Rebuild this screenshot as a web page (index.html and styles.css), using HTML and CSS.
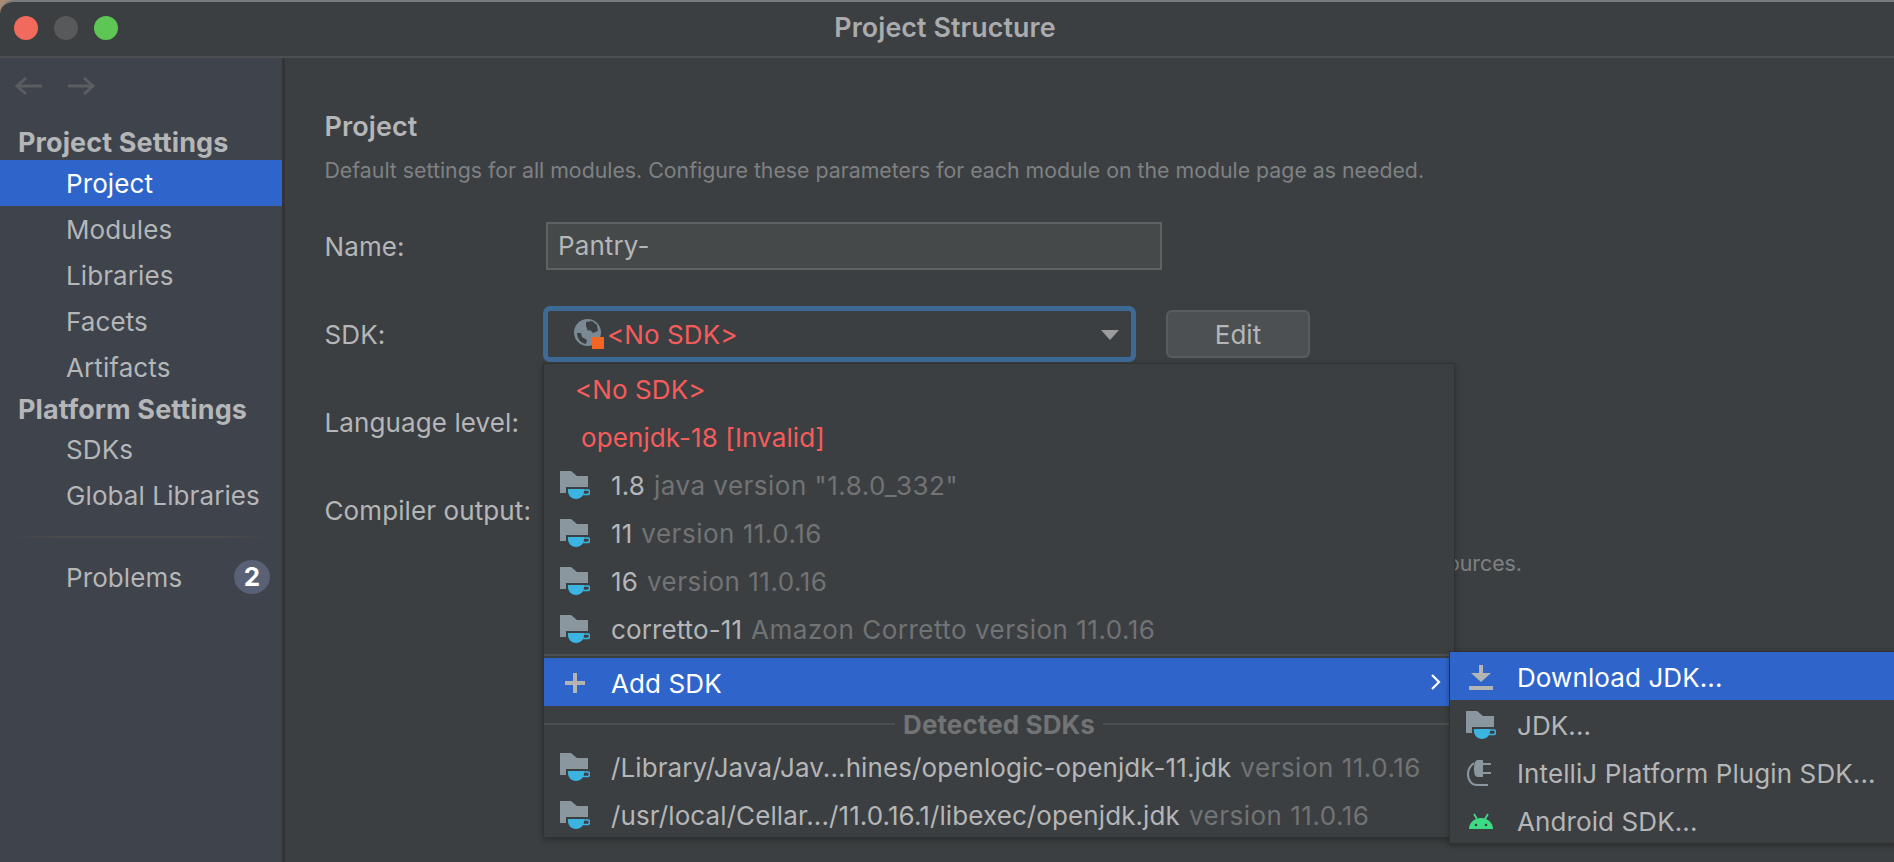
FILE: index.html
```html
<!DOCTYPE html>
<html lang="en">

<head>
    <meta charset="UTF-8">
    <meta name="viewport" content="width=device-width, initial-scale=1.0">
    <title>Project Structure</title>
    <link rel="stylesheet" href="styles.css">
</head>

<body>
    <svg class="defs" width="0" height="0">
        <symbol id="jdk" viewBox="0 0 30 28">
            <path d="M0 0h11l6 5h11v11H6v6H0z" fill="#8a979f"/>
            <path d="M8 18h16v2c0 4-3 8-8 8s-8-4-8-8z" fill="#3cb4e2"/>
            <path d="M24 19h4c2 0 2 4.500 0 4.500h-5" fill="none" stroke="#3cb4e2" stroke-width="1.600"/>
        </symbol>
    </svg>

    <div class="window">
        <header class="titlebar">
            <div class="lights">
                <span class="light red"></span>
                <span class="light grey"></span>
                <span class="light green"></span>
            </div>
            <h1>Project Structure</h1>
        </header>

        <div class="content">
            <aside class="sidebar">
                <div class="arrows">
                    <svg width="28" height="20" viewBox="0 0 28 20"><path d="M12 2 3 10l9 8M3 10h25" fill="none" stroke="#5b5d5f" stroke-width="3"/></svg>
                    <svg width="28" height="20" viewBox="0 0 28 20"><path d="M16 2l9 8-9 8M25 10H0" fill="none" stroke="#5b5d5f" stroke-width="3"/></svg>
                </div>
                <div class="side-head first">Project Settings</div>
                <a class="side-item selected">Project</a>
                <a class="side-item">Modules</a>
                <a class="side-item">Libraries</a>
                <a class="side-item">Facets</a>
                <a class="side-item">Artifacts</a>
                <div class="side-head">Platform Settings</div>
                <a class="side-item">SDKs</a>
                <a class="side-item">Global Libraries</a>
                <div class="side-divider"></div>
                <a class="side-item">Problems <span class="badge">2</span></a>
            </aside>

            <main class="main">
                <h2>Project</h2>
                <p class="desc">Default settings for all modules. Configure these parameters for each module on the module page as needed.</p>

                <div class="form">
                    <label>Name:</label>
                    <div class="name-input">Pantry-</div>

                    <label>SDK:</label>
                    <div class="sdk-row">
                        <div class="combo">
                            <svg class="globe" width="30" height="30" viewBox="0 0 30 30">
                                <circle cx="13.500" cy="13.500" r="13.500" fill="#7a8a94"/>
                                <path d="M12 3l6-1 5 4 1 6-5 2-3-3-2 1-2-5zM3 14c0 6 4 10 9 11l1-4-5-3-1-4z" fill="#3c3f41"/>
                                <rect x="18" y="18" width="12" height="12" fill="#f26522"/>
                            </svg>
                            <span class="red-text">&lt;No SDK&gt;</span>
                            <span class="caret"></span>
                        </div>
                        <button class="edit">Edit</button>
                    </div>

                    <label>Language level:</label>
                    <div></div>

                    <label>Compiler output:</label>
                    <div></div>
                </div>
                <p class="hint">ources.</p>
            </main>
        </div>

        <div class="popup">
            <div class="row no-icon"><span class="red-text">&lt;No SDK&gt;</span></div>
            <div class="row invalid"><span class="red-text">openjdk-18 [Invalid]</span></div>
            <div class="row"><svg class="ico"><use href="#jdk"/></svg><span>1.8</span> <span class="dim">java version "1.8.0_332"</span></div>
            <div class="row"><svg class="ico"><use href="#jdk"/></svg><span>11</span> <span class="dim">version 11.0.16</span></div>
            <div class="row"><svg class="ico"><use href="#jdk"/></svg><span>16</span> <span class="dim">version 11.0.16</span></div>
            <div class="row"><svg class="ico"><use href="#jdk"/></svg><span>corretto-11</span> <span class="dim">Amazon Corretto version 11.0.16</span></div>
            <div class="pop-sep"></div>
            <div class="row active">
                <svg class="ico" viewBox="0 0 28 28"><path d="M14 4v20M4 14h20" stroke="#b4b4b4" stroke-width="4"/></svg>
                <span>Add SDK</span>
                <svg class="chev" width="12" height="18" viewBox="0 0 12 18"><path d="M2 2l7 7-7 7" fill="none" stroke="#fff" stroke-width="2.200"/></svg>
            </div>
            <div class="detected"><span>Detected SDKs</span></div>
            <div class="row"><svg class="ico"><use href="#jdk"/></svg><span>/Library/Java/Jav...hines/openlogic-openjdk-11.jdk</span> <span class="dim">version 11.0.16</span></div>
            <div class="row"><svg class="ico"><use href="#jdk"/></svg><span>/usr/local/Cellar.../11.0.16.1/libexec/openjdk.jdk</span> <span class="dim">version 11.0.16</span></div>
        </div>

        <div class="submenu">
            <div class="row active">
                <svg class="ico" viewBox="0 0 28 28"><path d="M4 10h20l-10 9zM2 23h24v4H2z" fill="#b4b4b4"/><path d="M14 2v10" stroke="#b4b4b4" stroke-width="4"/></svg>
                <span>Download JDK...</span>
            </div>
            <div class="row"><svg class="ico"><use href="#jdk"/></svg><span>JDK...</span></div>
            <div class="row">
                <svg class="ico" viewBox="0 0 28 28"><path d="M11 1h5v3h8v2h-8v7h8v2h-8v3h-5c-3 0-4-3-4-8s1-9 4-9z" fill="#8a979f"/><path d="M7 4C3 7 1 10 1 15c0 7 4 11 9 11h11" fill="none" stroke="#8a979f" stroke-width="2"/></svg>
                <span>IntelliJ Platform Plugin SDK...</span>
            </div>
            <div class="row">
                <svg class="ico" viewBox="0 0 28 28"><path d="M2 22c0-6 5-11 12-11s12 5 12 11z" fill="#3ddc84"/><path d="M7 7l3 5M21 7l-3 5" stroke="#3ddc84" stroke-width="1.800"/><circle cx="9" cy="18" r="1.300" fill="#3c3f41"/><circle cx="19" cy="18" r="1.300" fill="#3c3f41"/></svg>
                <span>Android SDK...</span>
            </div>
        </div>
    </div>
</body>

</html>
```

FILE: styles.css
```css
* {
    box-sizing: border-box;
}

html, body {
    height: 100%;
}

body {
    margin: 0;
    background-color: #a98a72;
    font-family: Inter, "Open Sans", sans-serif;
    font-size: 26px;
    letter-spacing: 0.1px;
    color: #b4b6b8;
    overflow: hidden;
}

.defs {
    position: absolute;
}

.window {
    position: relative;
    height: 862px;
    background-color: #3c3f41;
    border-top: 2px solid #7a7b7c;
    border-top-left-radius: 14px;
    overflow: hidden;
}

.titlebar {
    height: 56px;
    border-bottom: 2px solid #4c4e50;
    display: flex;
    align-items: center;
    justify-content: center;
    position: relative;
    padding: 0 4px 4px 0;
}

.titlebar h1 {
    margin: 0;
    font-size: 26.8px;
    font-weight: 600;
    color: #a9abad;
}

.lights {
    position: absolute;
    left: 14px;
    top: 14px;
    display: flex;
    gap: 16px;
}

.light {
    width: 24px;
    height: 24px;
    border-radius: 50%;
}

.red { background-color: #f26a5e; }
.grey { background-color: #58595b; }
.green { background-color: #5dc655; }

.content {
    display: flex;
    height: 804px;
}

.sidebar {
    width: 285px;
    flex-shrink: 0;
    background-color: #3e434c;
    border-right: 3px solid #323437;
}

.arrows {
    display: flex;
    gap: 26px;
    padding: 18px 0 0 14px;
    height: 71px;
}

.side-head {
    height: 28px;
    line-height: 28px;
    margin: 6px 0 2px;
    padding-left: 18px;
    font-size: 27px;
    font-weight: 700;
    color: #b4b6b8;
}

.side-head.first {
    margin: 0 0 3px;
}

.side-item {
    display: flex;
    align-items: center;
    justify-content: space-between;
    height: 46px;
    padding-left: 66px;
    padding-right: 12px;
}

.selected {
    background-color: #2f65ca;
    color: #fff;
}

.side-divider {
    height: 2px;
    margin: 18px 12px 16px;
    background: linear-gradient(to right, #3e434c, #4d4c4c 20%, #4d4c4c 80%, #3e434c);
}

.badge {
    width: 36px;
    height: 34px;
    border-radius: 50%;
    background-color: #5a6176;
    color: #fff;
    font-weight: 700;
    text-align: center;
    line-height: 34px;
}

.main {
    flex: 1;
    padding: 54px 372px 0 39.5px;
}

.main h2 {
    margin: 0;
    font-size: 27px;
    font-weight: 600;
    line-height: 30px;
    color: #b4b6b8;
}

.desc {
    margin: 15px 0 0;
    font-size: 21.3px;
    line-height: 26px;
    white-space: nowrap;
    letter-spacing: 0;
    color: #7f8183;
}

.form {
    display: grid;
    grid-template-columns: 221.5px 1fr;
    grid-auto-rows: 88px;
    align-items: center;
    margin-top: 19px;
}

.name-input {
    width: 616px;
    height: 48px;
    line-height: 44px;
    padding-left: 10px;
    background-color: #45494a;
    border: 2px solid #5f6162;
}

.sdk-row {
    display: flex;
    align-items: center;
}

.combo {
    display: flex;
    flex-shrink: 0;
    align-items: center;
    width: 593px;
    height: 56px;
    margin-left: -3px;
    padding-left: 26px;
    border: 5px solid #3e6a96;
    border-radius: 7px;
    position: relative;
}

.globe {
    margin-right: 3px;
}

.caret {
    position: absolute;
    right: 12px;
    top: 19px;
    border-left: 9px solid transparent;
    border-right: 9px solid transparent;
    border-top: 10px solid #9a9c9e;
}

.edit {
    flex-shrink: 0;
    margin-left: 30px;
    width: 144px;
    height: 48px;
    border: 2px solid #5a5d5f;
    border-radius: 6px;
    background-color: #4c5052;
    color: #b4b6b8;
    font: inherit;
}

.hint {
    margin: -4px 0 0;
    text-align: right;
    white-space: nowrap;
    font-size: 21.3px;
    letter-spacing: 0;
    color: #7f8183;
}

.red-text {
    color: #f75c5c;
}

.dim {
    color: #717375;
    letter-spacing: 0.5px;
}

.popup, .submenu {
    position: absolute;
    background-color: #3c3f41;
    border: 1px solid #2f3133;
    box-shadow: 0 2px 6px rgba(0, 0, 0, 0.3);
}

.popup {
    left: 543px;
    top: 361px;
    width: 912px;
    height: 475px;
}

.submenu {
    left: 1449px;
    top: 649px;
    width: 447px;
    height: 193px;
}

.row {
    display: flex;
    align-items: center;
    height: 48px;
    padding-top: 2px;
    padding-left: 16px;
    white-space: pre;
}

.row > span + span {
    margin-left: 9px;
}

.no-icon {
    padding-left: 31px;
}

.invalid {
    padding-left: 37px;
}

.ico {
    width: 30px;
    height: 28px;
    margin-right: 21px;
    flex-shrink: 0;
}

.active {
    background-color: #2f65ca;
    color: #fff;
    position: relative;
}

.chev {
    position: absolute;
    right: 12px;
    top: 15px;
}

.pop-sep {
    height: 2px;
    margin: 2px 0;
    background-color: #4c4e50;
}

.detected {
    height: 36px;
    display: flex;
    align-items: center;
    justify-content: center;
    font-weight: 700;
    color: #717375;
    gap: 8px;
}

.detected::before, .detected::after {
    content: "";
    flex: 1;
    height: 2px;
    background-color: #4c4e50;
}
```
